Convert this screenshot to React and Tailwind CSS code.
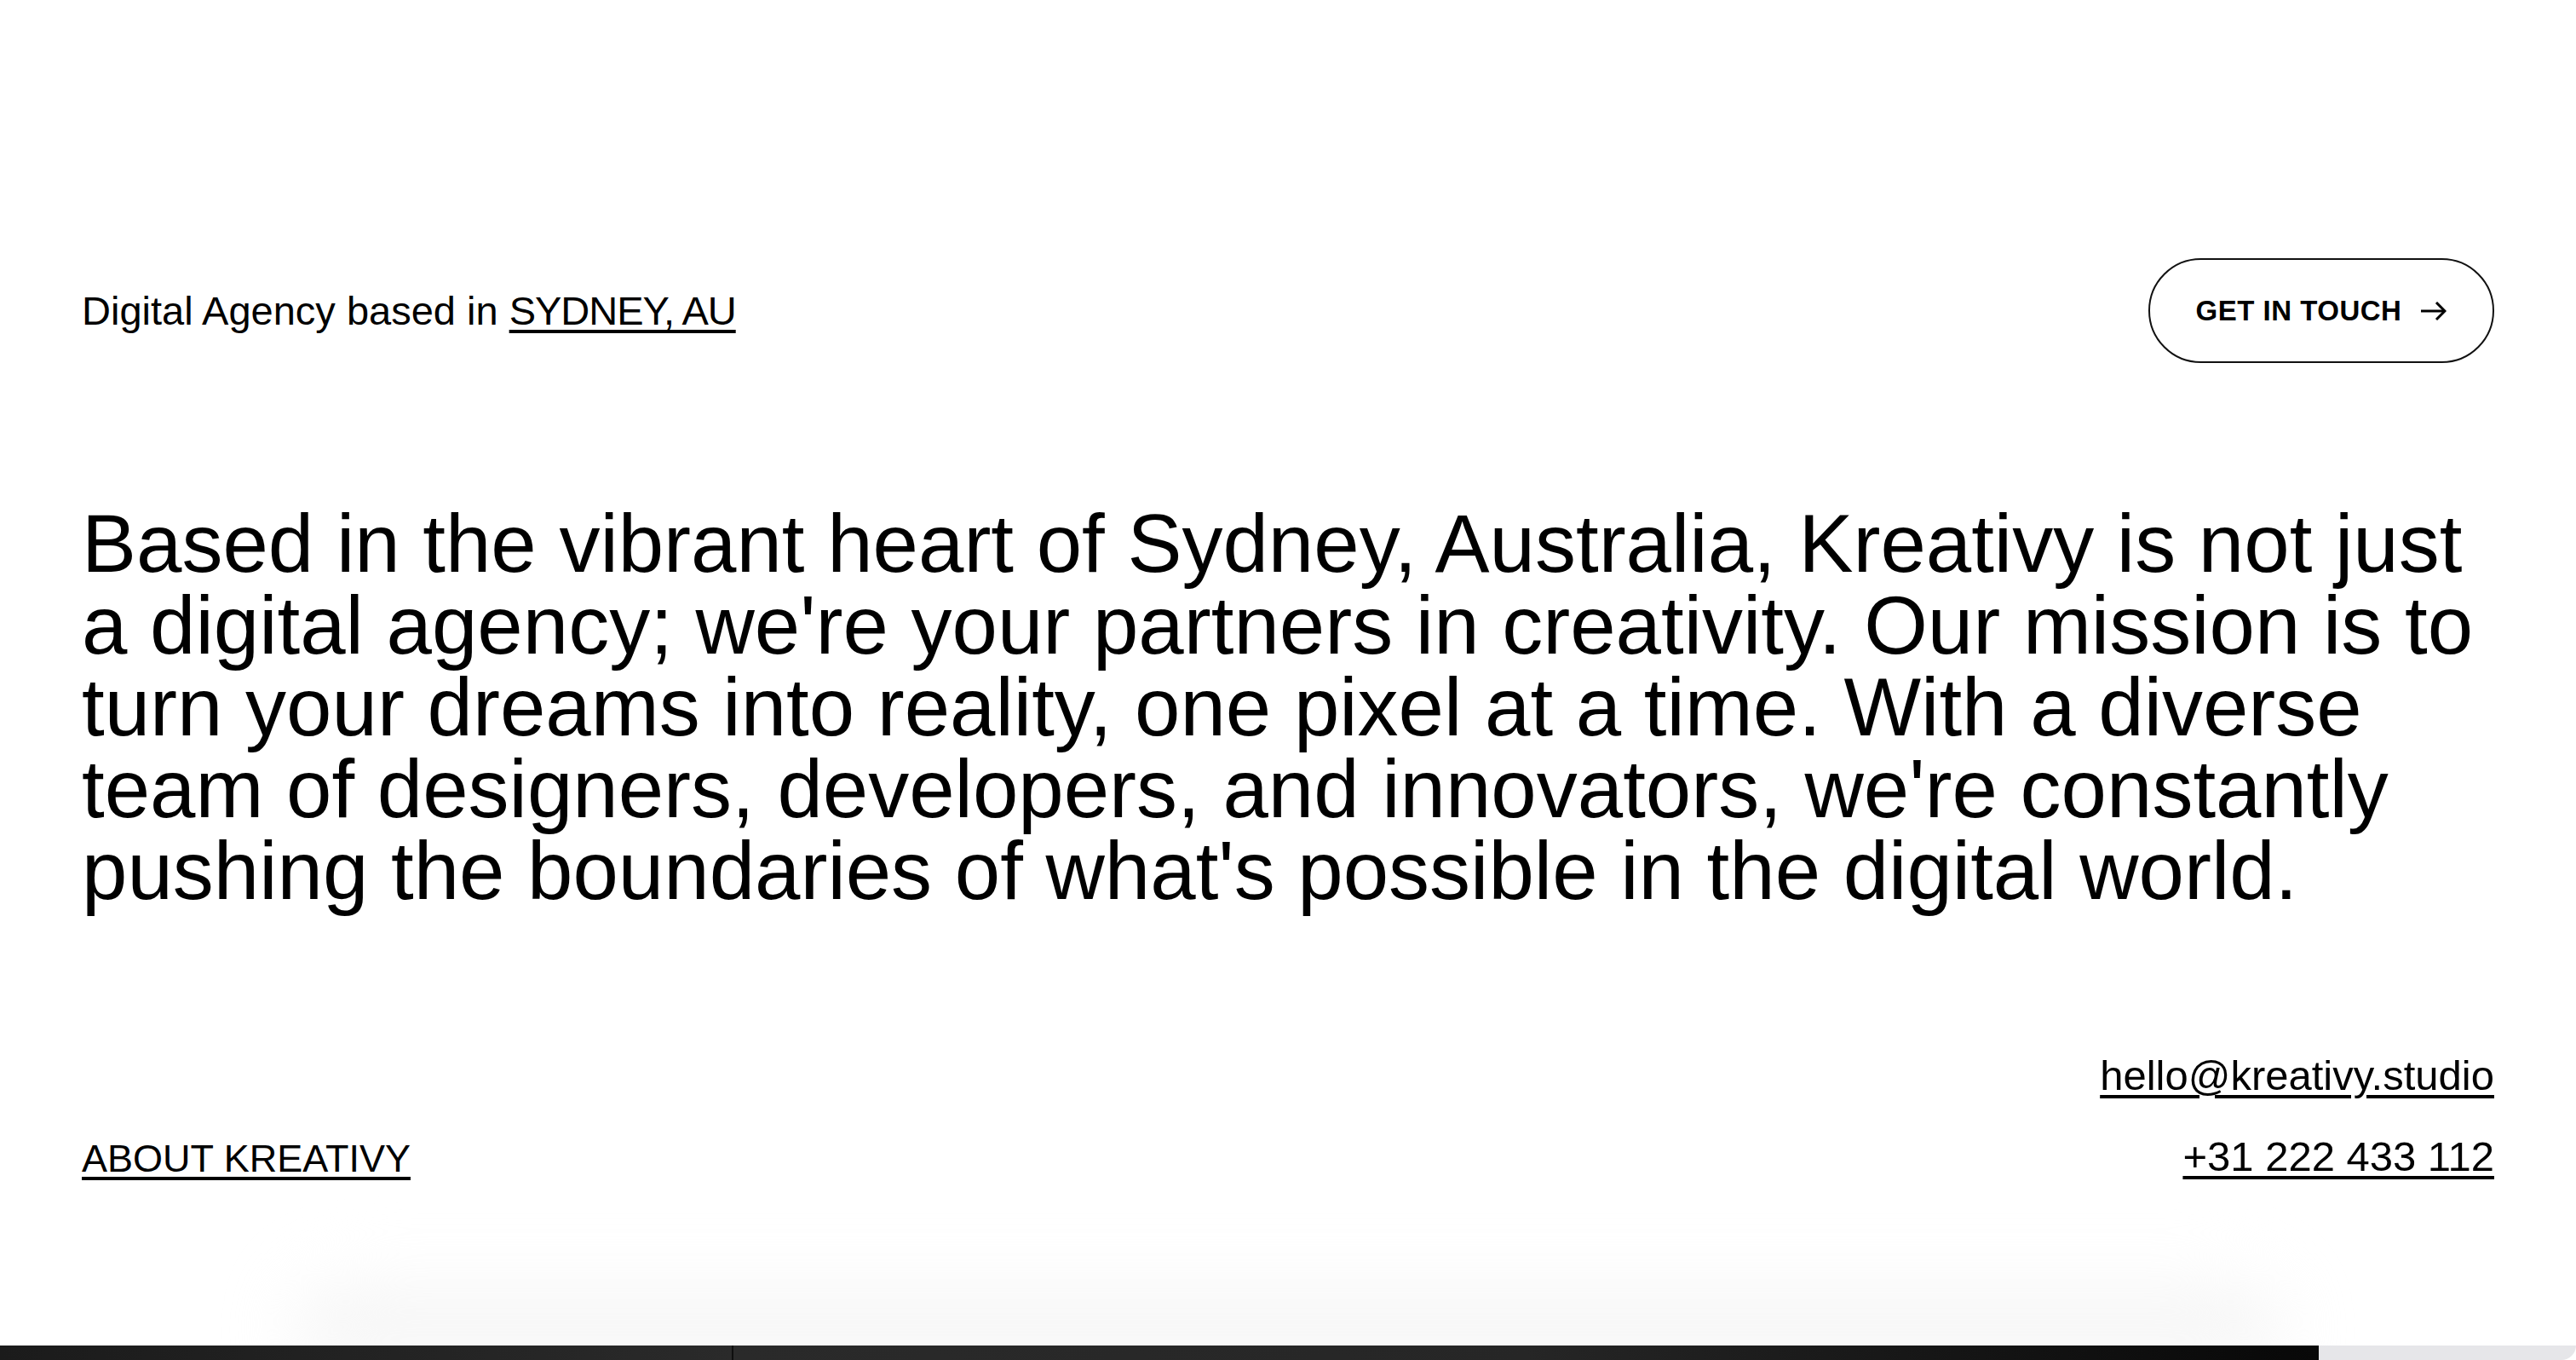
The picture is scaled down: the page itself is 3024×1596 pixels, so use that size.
import { useState } from 'react';

const lines = [
  'Based in the vibrant heart of Sydney, Australia, Kreativy is not just',
  "a digital agency; we're your partners in creativity. Our mission is to",
  'turn your dreams into reality, one pixel at a time. With a diverse',
  "team of designers, developers, and innovators, we're constantly",
  "pushing the boundaries of what's possible in the digital world.",
];

function Arrow() {
  return (
    <svg width="30" height="22" viewBox="0 0 30 22" fill="none" stroke="currentColor" strokeWidth="3">
      <path d="M0 11 H28" />
      <path d="M18 1 L28 11 L18 21" />
    </svg>
  );
}

export default function App() {
  const [hover, setHover] = useState(false);

  return (
    <div className="w-full h-[1596px] flex flex-col overflow-hidden bg-white font-['Liberation_Sans',Arial,sans-serif] text-black">
      {/* Main card */}
      <div className="h-[1579px] flex flex-col px-[96px] bg-white rounded-b-[22px] overflow-hidden">
        {/* Header row */}
        <div className="mt-[303px] h-[123px] flex items-center justify-between">
          <p className="text-[47px] leading-none">
            Digital Agency based in{' '}
            <a href="#" className="underline decoration-[4px] underline-offset-[6px] tracking-[-1px]">SYDNEY, AU</a>
          </p>
          <button
            onMouseEnter={() => setHover(true)}
            onMouseLeave={() => setHover(false)}
            className={`h-[123px] w-[406px] flex items-center justify-center gap-[23px] rounded-full border-[2px] border-[#111] text-[33px] font-bold tracking-[0.5px] ${hover ? 'bg-black text-white' : 'bg-white text-black'}`}
          >
            GET IN TOUCH
            <Arrow />
          </button>
        </div>

        {/* Intro */}
        <h1 className="mt-[164px] text-[96px] leading-[96px] font-normal">
          {lines.map((line) => (
            <span key={line} className="block whitespace-nowrap">{line}</span>
          ))}
        </h1>

        {/* Links */}
        <div className="mt-[168px] flex items-end justify-between leading-none">
          <a href="#" className="text-[45px] underline decoration-[4px] underline-offset-[6px]">ABOUT KREATIVY</a>
          <div className="flex flex-col items-end gap-[46px] text-[49px]">
            <a href="#" className="underline decoration-[4px] underline-offset-[6px]">hello@kreativy.studio</a>
            <a href="#" className="underline decoration-[4px] underline-offset-[6px]">+31 222 433 112</a>
          </div>
        </div>

        <div className="flex-1" />
        {/* soft shadow of the next section */}
        <div className="mx-[250px] h-[80px] rounded-t-[100px] bg-gradient-to-b from-white to-[#ececec] blur-2xl" />
      </div>

      {/* Next section peeking */}
      <div className="h-[17px] flex">
        <div className="w-[861px] bg-gradient-to-r from-[#1b1b1b] to-[#2a2a2a] border-r-2 border-[#0e0e0e]" />
        <div className="w-[1861px] bg-gradient-to-r from-[#2a2a2a] via-[#262626] to-[#080808]" />
        <div className="flex-1 bg-[#e6e6e9] rounded-br-[18px]" />
      </div>
    </div>
  );
}
